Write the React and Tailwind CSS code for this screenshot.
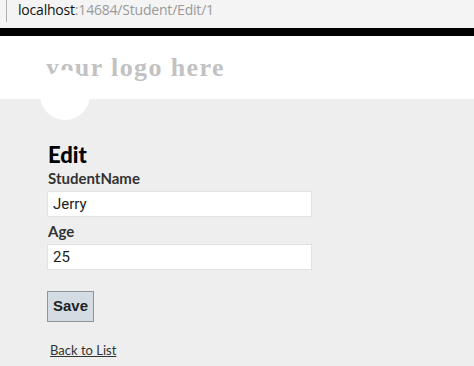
export default function App() {
  return (
    <div className="w-[474px] h-[366px] overflow-hidden bg-[#eeeeee] font-['Lato',sans-serif]">
      {/* address bar */}
      <div className="h-[28px] bg-[#f4f4f4] flex items-start">
        <div className="ml-[6px] w-px h-[22px] bg-[#b0b0b0]" />
        <div className="ml-[11px] mt-[1px] font-['Open_Sans',sans-serif] text-[14px] leading-[18px] tracking-[-0.2px]">
          <span className="text-[#111]">localhost</span>
          <span className="text-[#9a9a9a]">:14684/Student/Edit/1</span>
        </div>
      </div>
      <div className="h-[8px] bg-black" />

      {/* header */}
      <header className="h-[63px] bg-white pl-[46px] pt-[18px]">
        <p className="font-['Liberation_Serif',serif] font-bold text-[26px] leading-[28px] text-[#c2c2c2] tracking-[1.4px]">
          your logo here
        </p>
      </header>

      <main className="relative pl-[48px] pt-[44px]">
        <div className="absolute left-[40px] top-[-29px] w-[50px] h-[50px] rounded-full bg-white" />

        <h2 className="font-black text-[22px] leading-[24px] text-black">Edit</h2>

        <label className="block mt-[2px] font-bold text-[15px] leading-[18px] text-[#333]">StudentName</label>
        <div className="mt-[4px] -ml-[1px] w-[265px] h-[26px] bg-white border border-[#e2e2e2] flex items-center pl-[5px] font-['Roboto',sans-serif] text-[15px] text-[#222]">
          Jerry
        </div>

        <label className="block mt-[5px] font-bold text-[15px] leading-[18px] text-[#333]">Age</label>
        <div className="mt-[4px] -ml-[1px] w-[265px] h-[26px] bg-white border border-[#e2e2e2] flex items-center pl-[5px] font-['Roboto',sans-serif] text-[15px] text-[#222]">
          25
        </div>

        <button className="mt-[21px] -ml-[1px] w-[47px] h-[31px] bg-[#d3dce3] border border-[#8f9499] font-['Liberation_Sans',sans-serif] font-bold text-[15px] text-[#222]">
          Save
        </button>

        <div className="mt-[15px] ml-[2px]">
          <a href="#" className="underline text-[13px] leading-[16px] text-[#333]">Back to List</a>
        </div>
      </main>
    </div>
  );
}
